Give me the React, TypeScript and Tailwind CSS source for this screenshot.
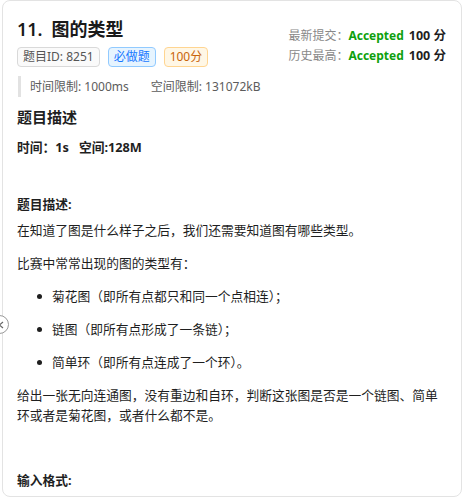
import React from 'react'

const font = { fontFamily: '"Noto Sans", "Noto Sans CJK SC", sans-serif' }

const Badge: React.FC<{ className: string; children: React.ReactNode }> = ({ className, children }) => (
  <span className={`inline-flex items-center h-[20px] px-[5px] rounded-[4px] border text-[12px] leading-none ${className}`}>
    {children}
  </span>
)

const bullets = [
  '菊花图（即所有点都只和同一个点相连）；',
  '链图（即所有点形成了一条链）；',
  '简单环（即所有点连成了一个环）。',
]

export default function App() {
  return (
    <div className="relative w-[463px] h-[500px] bg-white overflow-hidden text-[#1f1f1f]" style={font}>
      <div className="ml-[2px] mr-[1px] h-[497px] border border-[#e3e3e3] rounded-[8px] px-[14px] overflow-hidden">
        {/* header */}
        <div className="flex justify-between">
          <div className="pt-[15px]">
            <h1 className="text-[18px] font-semibold leading-[26px] text-[#1a1a1a] whitespace-nowrap">
              <span className="mr-[9px]">11.</span>图的类型
            </h1>
            <div className="flex gap-[8px] mt-[5px] whitespace-nowrap">
              <Badge className="border-[#d9d9d9] bg-[#fafafa] text-[#555]">题目ID: 8251</Badge>
              <Badge className="border-[#91caff] bg-[#e6f4ff] text-[#1677ff]">必做题</Badge>
              <Badge className="border-[#ffd591] bg-[#fff7e6] text-[#c9650a]">100分</Badge>
            </div>
          </div>
          <div className="pt-[25px] leading-[20px] whitespace-nowrap pr-[1px]">
            <div className="flex items-center">
              <span className="text-[12px] text-[#888]">最新提交：</span>
              <span className="text-[12px] font-bold text-[#0e9f0e]">Accepted</span>
              <span className="text-[12.5px] font-bold ml-[5px]">100 分</span>
            </div>
            <div className="flex items-center">
              <span className="text-[12px] text-[#888]">历史最高：</span>
              <span className="text-[12px] font-bold text-[#0e9f0e]">Accepted</span>
              <span className="text-[12.5px] font-bold ml-[5px]">100 分</span>
            </div>
          </div>
        </div>

        {/* limits */}
        <div className="mt-[9px] ml-[1px] border-l-[3px] border-[#e2e2e2] pl-[9px] h-[21px] flex items-center text-[12px] text-[#5c5c5c]">
          <span>时间限制: 1000ms</span>
          <span className="ml-[22px]">空间限制: 131072kB</span>
        </div>

        {/* description */}
        <h2 className="mt-[10px] text-[15px] font-bold leading-[20px]">题目描述</h2>
        <p className="mt-[10px] text-[12.75px] font-bold leading-[20px]">时间：1s&nbsp;&nbsp;&nbsp;空间:128M</p>

        <div className="text-[12.75px] leading-[20px]">
          <p className="mt-[37px] font-bold">题目描述:</p>
          <p className="mt-[6px]">在知道了图是什么样子之后，我们还需要知道图有哪些类型。</p>
          <p className="mt-[13px]">比赛中常常出现的图的类型有：</p>
          <ul className="mt-[13px] flex flex-col gap-[13px]">
            {bullets.map((b) => (
              <li key={b} className="flex items-center">
                <span className="ml-[20px] mr-[10px] w-[5px] h-[5px] rounded-full bg-[#1f1f1f]" />
                <span>{b}</span>
              </li>
            ))}
          </ul>
          <p className="mt-[13px]">给出一张无向连通图，没有重边和自环，判断这张图是否是一个链图、简单环或者是菊花图，或者什么都不是。</p>
          <p className="mt-[45px] font-bold">输入格式:</p>
        </div>
      </div>

      {/* collapse button */}
      <div className="absolute left-[-10px] top-[315px] w-[19px] h-[19px] rounded-full border border-[#9a9a9a] bg-white flex items-center justify-end pr-[4px]">
        <svg width="6" height="8" viewBox="0 0 6 8" fill="none" stroke="#666" strokeWidth="1.2">
          <path d="M5 1L1.5 4L5 7" />
        </svg>
      </div>
    </div>
  )
}
